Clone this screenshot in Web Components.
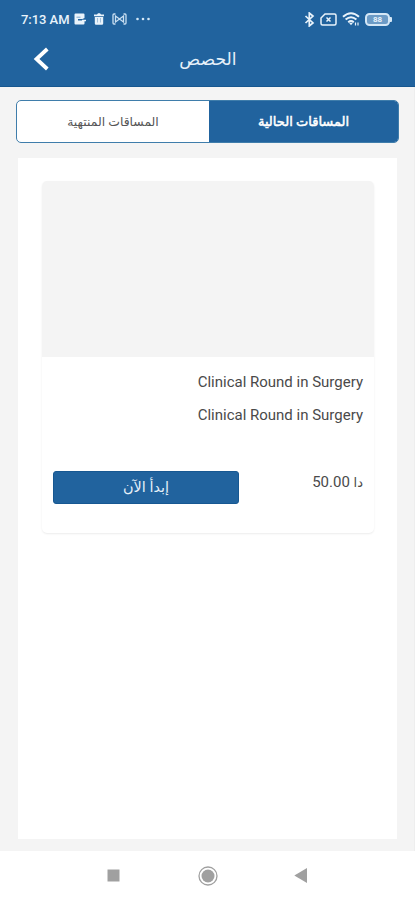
<!DOCTYPE html>
<html lang="ar">
<head>
<meta charset="UTF-8">
<meta name="viewport" content="width=device-width, initial-scale=1">
<title>الحصص</title>
<style>
  body {
    margin: 0;
    background: #f4f4f4;
    font-family: Roboto, 'DejaVu Sans', sans-serif;
    color: #4a4a4a;
  }
</style>
</head>
<body>
<app-screen>
  <status-bar slot="top" time="7:13 AM" battery="88"></status-bar>
  <app-header slot="top">الحصص</app-header>
  <tab-switch>
    <tab-item>المساقات المنتهية</tab-item>
    <tab-item active>المساقات الحالية</tab-item>
  </tab-switch>
  <course-list>
    <course-card price="50.00" currency="دا">
      <span slot="title">Clinical Round in Surgery</span>
      <span slot="subtitle">Clinical Round in Surgery</span>
      <start-button slot="action">إبدأ الآن</start-button>
    </course-card>
  </course-list>
  <system-nav slot="bottom"></system-nav>
</app-screen>

<script>
// Shared Styles Helper
const sharedStyles = `
  * { box-sizing: border-box; }
  svg { display: block; flex: none; }
`;

// AppScreen Component
class AppScreen extends HTMLElement {
  constructor() {
    super();
    this.attachShadow({ mode: 'open' });
  }
  connectedCallback() {
    this.shadowRoot.innerHTML = `
      <style>
        ${sharedStyles}
        :host {
          display: flex;
          flex-direction: column;
          height: 900px;
          overflow: hidden;
        }
        .top { background: #21639e; height: 87px; border-bottom: 1px solid #17578f; }
        main {
          flex: 1;
          display: flex;
          flex-direction: column;
          gap: 15px;
          padding: 13px 15px 12px 16px;
          border-right: 1px solid #eee;
        }
      </style>
      <div class="top"><slot name="top"></slot></div>
      <main><slot></slot></main>
      <slot name="bottom"></slot>
    `;
  }
}

// StatusBar Component
class StatusBar extends HTMLElement {
  constructor() {
    super();
    this.attachShadow({ mode: 'open' });
  }
  connectedCallback() {
    const time = this.getAttribute('time') || '';
    const battery = this.getAttribute('battery') || '';
    this.shadowRoot.innerHTML = `
      <style>
        ${sharedStyles}
        :host {
          display: flex;
          justify-content: space-between;
          align-items: center;
          height: 38px;
          padding: 0 23px 0 21px;
          color: #e9f3fb;
        }
        .group { display: flex; align-items: center; }
        .time { font-size: 13px; font-weight: 500; letter-spacing: -0.05px; width: 53px; white-space: nowrap; }
        .left { gap: 7px; }
        .left svg:last-child { margin-left: 1px; }
        .right { gap: 5px; }
        .battery { display: flex; align-items: center; }
        .cell {
          width: 25px;
          height: 13px;
          border: 2px solid #d4e7f6;
          border-radius: 4.5px;
          background: #6c9bc6;
          font-size: 8px;
          line-height: 9px;
          font-weight: 700;
          text-align: center;
        }
        .tip { width: 2px; height: 5px; border-radius: 0 1px 1px 0; background: #d4e7f6; }
      </style>
      <div class="group left">
        <span class="time">${time}</span>
        <svg width="12" height="12" viewBox="0 0 12 12" style="margin-left:-7px">
          <path d="M1.500.5h8a1 1 0 0 1 1 1V5L8.500 6H4v1.500h6.500v3a1 1 0 0 1-1 1h-8a1 1 0 0 1-1-1v-9a1 1 0 0 1 1-1z" fill="#e9f3fb"/>
          <path d="M2.500 4.200h4" stroke="#6f9fc8" stroke-width=".9"/>
          <path d="M8 7.500h4" stroke="#e9f3fb" stroke-width="1.500"/>
        </svg>
        <svg width="12" height="12" viewBox="0 0 12 12">
          <path d="M1 1.500h3L5 .3h2l1 1.200h3v1.700H1zM1.800 4h8.400v6.500a1.300 1.300 0 0 1-1.300 1.300H3.100a1.300 1.300 0 0 1-1.300-1.300z" fill="#e9f3fb"/>
          <path d="M4.500 5v4.500M7.500 5v4.500" stroke="#8fb4d6" stroke-width=".8"/>
        </svg>
        <svg width="15" height="12" viewBox="0 0 15 12" fill="none" stroke="#c9dff2" stroke-width="1.300">
          <path d="M3.500 1H2q-1 0-1 1v8q0 1 1 1h1.500M11.500 1H13q1 0 1 1v8q0 1-1 1h-1.500"/>
          <path d="M3.500 3v6l8-6v6z"/>
        </svg>
        <svg width="18" height="4" viewBox="0 0 18 4" fill="#d4e7f6">
          <circle cx="2.500" cy="2" r="1.300"/><circle cx="8" cy="2" r="1.300"/><circle cx="13.500" cy="2" r="1.300"/>
        </svg>
      </div>
      <div class="group right">
        <svg width="11" height="15" viewBox="0 0 11 15" fill="none" stroke="#e9f3fb" stroke-width="1.700">
          <path d="M1.500 4l7.500 7-3.700 3V1L9 4l-7.500 7"/>
        </svg>
        <svg width="17" height="13" viewBox="0 0 17 13" fill="none" stroke="#e9f3fb" stroke-width="1.500">
          <path d="M5 1h9.500q1.500 0 1.500 1.500v8q0 1.500-1.500 1.500h-12Q1 12 1 10.500V5z"/>
          <path d="M6.500 4.500l4 4M10.500 4.500l-4 4"/>
        </svg>
        <svg width="18" height="14" viewBox="0 0 18 14" fill="none" stroke="#e9f3fb" stroke-width="2">
          <path d="M1 4.700q8-7 16 0M3.600 7.500q5.400-4.600 10.800 0M6.200 10.200q2.800-2.200 5.600 0"/>
          <path d="M7.200 11h3.600L9 13.300z" fill="#e9f3fb" stroke="none"/>
          <path d="M13.500 10.500v3M16 10.500v3" stroke-width="1.200"/>
        </svg>
        <div class="battery"><div class="cell">${battery}</div><div class="tip"></div></div>
      </div>
    `;
  }
}

// AppHeader Component
class AppHeader extends HTMLElement {
  constructor() {
    super();
    this.attachShadow({ mode: 'open' });
  }
  connectedCallback() {
    this.shadowRoot.innerHTML = `
      <style>
        ${sharedStyles}
        :host {
          display: grid;
          grid-template-columns: 60px 1fr 59px;
          align-items: center;
          height: 42px;
          color: #e6f0f9;
        }
        svg { margin-left: 33px; }
        h1 {
          margin: 0;
          font-size: 17.3px;
          line-height: 24px;
          font-weight: 400;
          text-align: center;
          direction: rtl;
        }
      </style>
      <svg width="17" height="24" viewBox="0 0 17 24" fill="none" stroke="#fff" stroke-width="3.800">
        <path d="M14.300 2L3.500 12l10.800 10"/>
      </svg>
      <h1><slot></slot></h1>
    `;
  }
}

// TabSwitch Component
class TabSwitch extends HTMLElement {
  constructor() {
    super();
    this.attachShadow({ mode: 'open' });
  }
  connectedCallback() {
    this.shadowRoot.innerHTML = `
      <style>
        ${sharedStyles}
        :host {
          box-sizing: border-box;
          display: grid;
          grid-template-columns: 192px 1fr;
          height: 43px;
          border: 1px solid #3f7dab;
          border-radius: 5px;
          overflow: hidden;
          background: #fff;
        }
      </style>
      <slot></slot>
    `;
  }
}

// TabItem Component
class TabItem extends HTMLElement {
  constructor() {
    super();
    this.attachShadow({ mode: 'open' });
  }
  connectedCallback() {
    this.shadowRoot.innerHTML = `
      <style>
        :host {
          display: flex;
          align-items: center;
          justify-content: center;
          direction: rtl;
          font-size: 12.4px;
          color: #555;
        }
        :host([active]) {
          background: #21639e;
          color: #fff;
          font-size: 13px;
          -webkit-text-stroke: 0.5px #fff;
        }
      </style>
      <span><slot></slot></span>
    `;
  }
}

// CourseList Component
class CourseList extends HTMLElement {
  constructor() {
    super();
    this.attachShadow({ mode: 'open' });
  }
  connectedCallback() {
    this.shadowRoot.innerHTML = `
      <style>
        :host {
          display: block;
          flex: 1;
          margin: 0 2px;
          padding: 23px 23px 0 24px;
          background: #fff;
        }
      </style>
      <slot></slot>
    `;
  }
}

// CourseCard Component
class CourseCard extends HTMLElement {
  constructor() {
    super();
    this.attachShadow({ mode: 'open' });
  }
  connectedCallback() {
    const price = this.getAttribute('price') || '';
    const currency = this.getAttribute('currency') || '';
    this.shadowRoot.innerHTML = `
      <style>
        ${sharedStyles}
        :host {
          box-sizing: border-box;
          display: block;
          height: 352px;
          border-radius: 5px;
          box-shadow: 0 1px 2px #ececec;
          overflow: hidden;
          background: #fff;
        }
        .cover { height: 176px; background: #f4f4f4; }
        .body { padding: 13px 11px 0 11px; }
        .line {
          height: 24px;
          margin-bottom: 9px;
          font-size: 15px;
          line-height: 24px;
          text-align: right;
        }
        .footer {
          display: flex;
          justify-content: space-between;
          align-items: flex-start;
          margin-top: 44px;
        }
        .price { font-size: 15px; line-height: 22px; white-space: nowrap; }
        .price small { font-size: 13px; }
      </style>
      <div class="cover"></div>
      <div class="body">
        <div class="line"><slot name="title"></slot></div>
        <div class="line"><slot name="subtitle"></slot></div>
        <div class="footer">
          <slot name="action"></slot>
          <div class="price">${price} <small>${currency}</small></div>
        </div>
      </div>
    `;
  }
}

// StartButton Component
class StartButton extends HTMLElement {
  constructor() {
    super();
    this.attachShadow({ mode: 'open' });
  }
  connectedCallback() {
    this.shadowRoot.innerHTML = `
      <style>
        button {
          display: block;
          width: 186px;
          height: 33px;
          padding: 0;
          border: 1px solid #175892;
          border-radius: 3px;
          background: #21639e;
          color: #e6f0f9;
          font-family: inherit;
          font-size: 14.4px;
          direction: rtl;
        }
      </style>
      <button><slot></slot></button>
    `;
  }
}

// SystemNav Component
class SystemNav extends HTMLElement {
  constructor() {
    super();
    this.attachShadow({ mode: 'open' });
  }
  connectedCallback() {
    this.shadowRoot.innerHTML = `
      <style>
        ${sharedStyles}
        :host {
          box-sizing: border-box;
          display: flex;
          align-items: center;
          justify-content: space-between;
          height: 49px;
          padding: 0 108px 0 107px;
          background: #fff;
        }
        .home { margin-left: 1px; }
      </style>
      <svg width="13" height="13" viewBox="0 0 13 13"><path d="M.5.500h12v12H.500z" fill="#a0a0a0"/></svg>
      <svg class="home" width="20" height="20" viewBox="0 0 20 20">
        <circle cx="10" cy="10" r="9" fill="none" stroke="#a0a0a0" stroke-width="1.300"/>
        <circle cx="10" cy="10" r="6.500" fill="#a0a0a0"/>
      </svg>
      <svg width="13" height="15" viewBox="0 0 13 15"><path d="M13 0v15L.3 7.500z" fill="#a0a0a0"/></svg>
    `;
  }
}

// Register Components
customElements.define('app-screen', AppScreen);
customElements.define('status-bar', StatusBar);
customElements.define('app-header', AppHeader);
customElements.define('tab-switch', TabSwitch);
customElements.define('tab-item', TabItem);
customElements.define('course-list', CourseList);
customElements.define('course-card', CourseCard);
customElements.define('start-button', StartButton);
customElements.define('system-nav', SystemNav);
</script>
</body>
</html>
